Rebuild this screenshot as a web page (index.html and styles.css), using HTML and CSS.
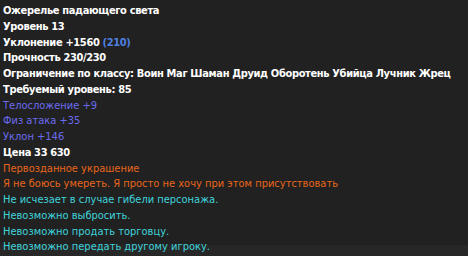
FILE: index.html
```html
<!DOCTYPE html>
<html lang="ru">
<head>
<meta charset="utf-8">
<link rel="stylesheet" href="styles.css">
</head>
<body>
<div class="tooltip">
  <div class="line b">Ожерелье падающего света</div>
  <div class="line b">Уровень 13</div>
  <div class="line b">Уклонение +1560 <span class="blue">(210)</span></div>
  <div class="line b">Прочность 230/230</div>
  <div class="line b">Ограничение по классу: Воин Маг Шаман Друид Оборотень Убийца Лучник Жрец</div>
  <div class="line b">Требуемый уровень: 85</div>
  <div class="line stat">Телосложение +9</div>
  <div class="line stat">Физ атака +35</div>
  <div class="line stat">Уклон +146</div>
  <div class="line b">Цена 33 630</div>
  <div class="line orange">Первозданное украшение</div>
  <div class="line orange">Я не боюсь умереть. Я просто не хочу при этом присутствовать</div>
  <div class="line cyan">Не исчезает в случае гибели персонажа.</div>
  <div class="line cyan">Невозможно выбросить.</div>
  <div class="line cyan">Невозможно продать торговцу.</div>
  <div class="line cyan">Невозможно передать другому игроку.</div>
</div>
</body>
</html>
```
FILE: styles.css
```css
html, body {
  margin: 0;
  padding: 0;
}
body {
  width: 468px;
  height: 256px;
  overflow: hidden;
  background: linear-gradient(to bottom, #212121 0, #212121 245px, #272727 245px, #272727 100%);
  font-family: "DejaVu Sans Condensed", "DejaVu Sans", sans-serif;
  font-size: 11px;
}
.tooltip {
  padding: 3px 3px 0;
}
.line {
  line-height: 15.75px;
  white-space: nowrap;
  color: #ffffff;
}
.b {
  font-weight: bold;
  letter-spacing: -0.35px;
}
.blue { color: #4f80e0; }
.stat { color: #6b6bef; }
.orange { color: #e8661c; }
.cyan { color: #40d4dc; }
```
